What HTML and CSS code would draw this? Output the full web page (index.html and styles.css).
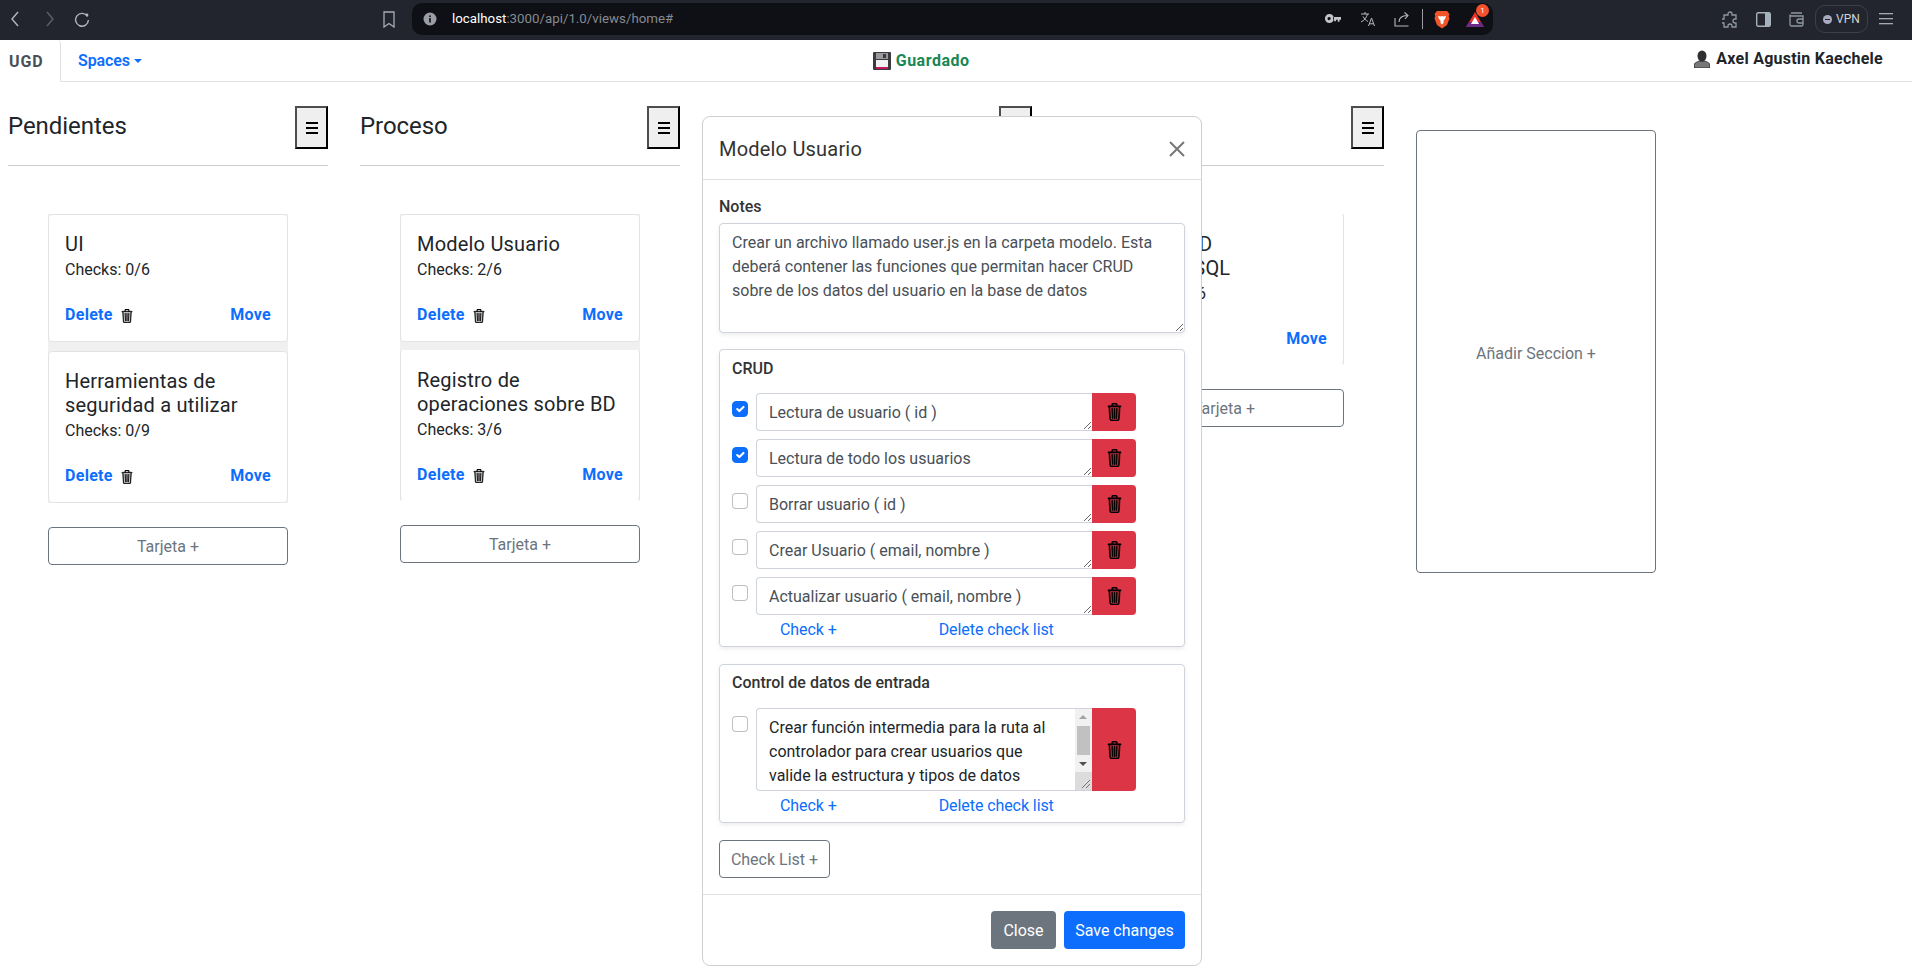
FILE: index.html
```html
<!DOCTYPE html>
<html lang="en">
<head>
    <meta charset="UTF-8">
    <title>UGD</title>
    <link rel="stylesheet" href="styles.css">
</head>
<body>
    <svg class="sprite" width="0" height="0">
        <symbol id="trash" viewBox="0 0 16 16" preserveAspectRatio="none">
            <path d="M6.5 1h3a.5.5 0 0 1 .5.5v1H6v-1a.5.5 0 0 1 .5-.5ZM11 2.5v-1A1.5 1.5 0 0 0 9.5 0h-3A1.5 1.5 0 0 0 5 1.5v1H2.506a.58.58 0 0 0-.01 0H1.5a.5.5 0 0 0 0 1h.538l.853 10.66A2 2 0 0 0 4.885 16h6.23a2 2 0 0 0 1.994-1.84l.853-10.66h.538a.5.5 0 0 0 0-1h-.995a.59.59 0 0 0-.01 0H11Zm1.958 1-.846 10.58a1 1 0 0 1-.997.92h-6.23a1 1 0 0 1-.997-.92L3.042 3.5h9.916Zm-7.487 1a.5.5 0 0 1 .528.47l.5 8.5a.5.5 0 0 1-.998.06L5 5.03a.5.5 0 0 1 .47-.53Zm5.058 0a.5.5 0 0 1 .47.53l-.5 8.5a.5.5 0 1 1-.998-.06l.5-8.5a.5.5 0 0 1 .528-.47ZM8 4.5a.5.5 0 0 1 .5.5v8.5a.5.5 0 0 1-1 0V5a.5.5 0 0 1 .5-.5Z"/>
        </symbol>
        <symbol id="bars" viewBox="0 0 12 12">
            <rect x="0" y="0" width="12" height="2"/>
            <rect x="0" y="5" width="12" height="2"/>
            <rect x="0" y="10" width="12" height="2"/>
        </symbol>
    </svg>

    <div class="browserBar">
        <div class="barNav">
            <svg width="10" height="16" viewBox="0 0 10 16" fill="none" stroke="#b4b7bd" stroke-width="1.4"><path d="M8 1 2 8l6 7"/></svg>
            <svg class="navForward" width="10" height="16" viewBox="0 0 10 16" fill="none" stroke="#5d6068" stroke-width="1.4"><path d="m2 1 6 7-6 7"/></svg>
            <svg class="navReload" width="16" height="16" viewBox="0 0 16 16" fill="none" stroke="#b4b7bd" stroke-width="1.4"><path d="M13.5 5.5A6.4 6.4 0 1 0 14.4 9"/><circle cx="13" cy="4" r="1.4" fill="#b4b7bd" stroke="none"/></svg>
        </div>
        <svg class="barBookmark" width="12" height="17" viewBox="0 0 12 17" fill="none" stroke="#a8abb2" stroke-width="1.3"><path d="M1 1h10v15l-5-3.5L1 16Z"/></svg>
        <div class="urlBox">
            <svg class="urlInfo" width="14" height="14" viewBox="0 0 14 14"><circle cx="7" cy="7" r="6.5" fill="#9a9da3"/><rect x="6.2" y="6" width="1.6" height="4.5" fill="#0e1015"/><rect x="6.2" y="3.4" width="1.6" height="1.6" fill="#0e1015"/></svg>
            <span class="urlText"><b>localhost</b>:3000/api/1.0/views/home#</span>
            <div class="urlIcons">
                <svg width="16" height="10" viewBox="0 0 16 10"><path d="M4.5 0a4.5 4.5 0 1 1-.1 9A4.5 4.5 0 0 1 4.5 0Zm0 3a1.6 1.6 0 1 0 0 3.100A1.600 1.600 0 0 0 4.500 3Z M8 3h8v2.800h-1.500v2h-1.800v-2H11v1.400H9.200V5.800H8Z" fill="#c2c4c8" fill-rule="evenodd"/></svg>
                <svg class="iconTranslate" width="16" height="16" viewBox="0 0 16 16" fill="none" stroke="#b7b9be" stroke-width="1"><path d="M1 3h8M5 1v2M7.500 3C6.500 7 4 9.500 1 11M3 5.500c1 2 3 4 5 5M8.500 15l3-8 3 8M9.500 12.800h4"/></svg>
                <svg class="iconShare" width="16" height="16" viewBox="0 0 16 16" fill="none" stroke="#b7b9be" stroke-width="1.100"><path d="M1 7v8h13.500M5 11c0-4 3-6.500 8-6.500M10.500 1.500 14 4.500l-3 3.500"/></svg>
                <span class="urlSep"></span>
                <svg class="iconBrave" width="16" height="19" viewBox="0 0 16 19"><path d="M3 1h10l2.500 3-.8 2 .8 2.500L13 15l-5 3.500L3 15 .5 8.500 1.300 6 .5 4Z" fill="#f1562b"/><path d="M4 6l2.500.5L8 6l1.500.5L12 6l-1 3-1.500 1.500V13L8 14.500 6.500 13v-2.500L5 9Z" fill="#fff"/></svg>
                <span class="iconBat">
                    <svg width="18" height="17" viewBox="0 0 18 17"><path d="M9 1 18 16H0Z" fill="#e8352b"/><path d="M0 16 3 11h12l3 5Z" fill="#6a2a86"/><path d="M9 6 13 13H5Z" fill="#fff"/></svg>
                    <span class="batBadge">1</span>
                </span>
            </div>
        </div>
        <div class="barRight">
            <svg width="16" height="17" viewBox="0 0 16 17" fill="none" stroke="#8f98a0" stroke-width="1.300"><path d="M6 3a2 2 0 0 1 4 0v1h4v4h-1a2 2 0 0 0 0 4h1v4H10v-1a2 2 0 0 0-4 0v1H2v-4H1a2 2 0 0 1 0-4h1V4h4Z"/></svg>
            <svg class="iconSide" width="15" height="15" viewBox="0 0 15 15"><rect x=".7" y=".7" width="13.600" height="13.600" rx="1.500" fill="none" stroke="#a6b2bb" stroke-width="1.400"/><rect x="9" y="1" width="5" height="13" fill="#a6b2bb"/></svg>
            <svg class="iconWallet" width="15" height="15" viewBox="0 0 15 15" fill="none" stroke="#8f98a0" stroke-width="1.300"><path d="M2 1h11M1 3v9.500A1.500 1.500 0 0 0 2.500 14h10a1.500 1.500 0 0 0 1.500-1.500V4H2.500A1.500 1.500 0 0 1 1 2.500M14 7h-4a2 2 0 0 0 0 4h4"/></svg>
            <div class="vpnPill"><span class="vpnDot"></span>VPN</div>
            <svg class="iconMenu" width="14" height="12" viewBox="0 0 14 12" fill="#a6a9af"><rect width="14" height="1.300"/><rect y="5" width="14" height="1.300"/><rect y="10" width="14" height="1.300"/></svg>
        </div>
    </div>

    <nav class="topNav">
        <div class="navLeft">
            <a class="navTab" href="#">UGD</a>
            <a class="navSpaces" href="#">Spaces<span class="caret"></span></a>
        </div>
        <div class="navStatus">
            <svg width="18" height="18" viewBox="0 0 18 18"><rect width="18" height="18" rx="1" fill="#3b3b3f"/><rect x="3" y="1" width="12" height="6" fill="#9a9a9e"/><rect x="3" y="8" width="12" height="8" fill="#f1f1f1"/><rect x="3" y="15" width="12" height="2" fill="#c2185b"/><rect x="10" y="2" width="3" height="4" fill="#3b3b3f"/></svg>
            <span>Guardado</span>
        </div>
        <div class="navUser">
            <svg width="16" height="18" viewBox="0 0 16 18"><path d="M0 18v-3c0-2 3-3 5-4h6c2 1 5 2 5 4v3Z" fill="#77777a" stroke="#222" stroke-width=".8"/><ellipse cx="8" cy="6" rx="4.500" ry="5.500" fill="#2f2f32"/></svg>
            <span>Axel Agustin Kaechele</span>
        </div>
    </nav>

    <main class="board">
        <section class="column">
            <div class="columnHead">
                <h3>Pendientes</h3>
                <button class="columnMenu"><svg width="12" height="12"><use href="#bars"/></svg></button>
            </div>
            <hr>
            <div class="cardList cardListWide">
                <div class="card">
                    <h5>UI</h5>
                    <p>Checks: 0/6</p>
                    <div class="cardLinks">
                        <a href="#">Delete<svg class="cardTrash"><use href="#trash"/></svg></a>
                        <a href="#">Move</a>
                    </div>
                </div>
                <div class="card">
                    <h5>Herramientas de seguridad a utilizar</h5>
                    <p>Checks: 0/9</p>
                    <div class="cardLinks">
                        <a href="#">Delete<svg class="cardTrash"><use href="#trash"/></svg></a>
                        <a href="#">Move</a>
                    </div>
                </div>
            </div>
            <button class="addCard">Tarjeta +</button>
        </section>

        <section class="column">
            <div class="columnHead">
                <h3>Proceso</h3>
                <button class="columnMenu"><svg width="12" height="12"><use href="#bars"/></svg></button>
            </div>
            <hr>
            <div class="cardList">
                <div class="card">
                    <h5>Modelo Usuario</h5>
                    <p>Checks: 2/6</p>
                    <div class="cardLinks">
                        <a href="#">Delete<svg class="cardTrash"><use href="#trash"/></svg></a>
                        <a href="#">Move</a>
                    </div>
                </div>
                <div class="card cardFlat">
                    <h5>Registro de operaciones sobre BD</h5>
                    <p>Checks: 3/6</p>
                    <div class="cardLinks">
                        <a href="#">Delete<svg class="cardTrash"><use href="#trash"/></svg></a>
                        <a href="#">Move</a>
                    </div>
                </div>
            </div>
            <button class="addCard">Tarjeta +</button>
        </section>

        <section class="column">
            <div class="columnHead">
                <h3>Terminado</h3>
                <button class="columnMenu"><svg width="12" height="12"><use href="#bars"/></svg></button>
            </div>
            <hr>
        </section>

        <section class="column">
            <div class="columnHead">
                <h3>Validación</h3>
                <button class="columnMenu"><svg width="12" height="12"><use href="#bars"/></svg></button>
            </div>
            <hr>
            <div class="cardList">
                <div class="card cardFlat">
                    <h5>Tablas BD<br>usando SQL</h5>
                    <p>Checks: 2/6</p>
                    <div class="cardLinks">
                        <a href="#">Delete<svg class="cardTrash"><use href="#trash"/></svg></a>
                        <a href="#">Move</a>
                    </div>
                </div>
            </div>
            <button class="addCard">Tarjeta +</button>
        </section>

        <button class="addSection">Añadir Seccion +</button>
    </main>

    <div class="modal">
        <div class="modalHead">
            <h5>Modelo Usuario</h5>
            <svg width="16" height="16" viewBox="0 0 16 16" stroke="#777" stroke-width="2"><path d="M1 1l14 14M15 1 1 15"/></svg>
        </div>
        <div class="modalBody">
            <label class="notesLabel">Notes</label>
            <textarea class="notes">Crear un archivo llamado user.js en la carpeta modelo. Esta deberá contener las funciones que permitan hacer CRUD sobre de los datos del usuario en la base de datos</textarea>

            <div class="checkList">
                <h6>CRUD</h6>
                <div class="checkRow">
                    <input type="checkbox" checked>
                    <textarea>Lectura de usuario ( id )</textarea>
                    <button class="checkDelete"><svg><use href="#trash"/></svg></button>
                </div>
                <div class="checkRow">
                    <input type="checkbox" checked>
                    <textarea>Lectura de todo los usuarios</textarea>
                    <button class="checkDelete"><svg><use href="#trash"/></svg></button>
                </div>
                <div class="checkRow">
                    <input type="checkbox">
                    <textarea>Borrar usuario ( id )</textarea>
                    <button class="checkDelete"><svg><use href="#trash"/></svg></button>
                </div>
                <div class="checkRow">
                    <input type="checkbox">
                    <textarea>Crear Usuario ( email, nombre )</textarea>
                    <button class="checkDelete"><svg><use href="#trash"/></svg></button>
                </div>
                <div class="checkRow">
                    <input type="checkbox">
                    <textarea>Actualizar usuario ( email, nombre )</textarea>
                    <button class="checkDelete"><svg><use href="#trash"/></svg></button>
                </div>
                <div class="checkLinks">
                    <a href="#">Check +</a>
                    <a href="#">Delete check list</a>
                </div>
            </div>

            <div class="checkList checkListTall">
                <h6>Control de datos de entrada</h6>
                <div class="checkRow checkRowTall">
                    <input type="checkbox">
                    <div class="scrollArea">
                        <textarea>Crear función intermedia para la ruta al controlador para crear usuarios que valide la estructura y tipos de datos</textarea>
                        <div class="fakeScroll">
                            <span class="scrollUp"></span>
                            <span class="scrollThumb"></span>
                            <span class="scrollDown"></span>
                            <svg class="scrollGrip" width="17" height="18" viewBox="0 0 17 18" stroke="#777" stroke-width="1"><path d="M7 16 15 8M11 16l4-4"/></svg>
                        </div>
                    </div>
                    <button class="checkDelete"><svg><use href="#trash"/></svg></button>
                </div>
                <div class="checkLinks">
                    <a href="#">Check +</a>
                    <a href="#">Delete check list</a>
                </div>
            </div>

            <button class="addList">Check List +</button>
        </div>
        <div class="modalFoot">
            <button class="btnClose">Close</button>
            <button class="btnSave">Save changes</button>
        </div>
    </div>
</body>
</html>
```

FILE: styles.css
```css
* {
    box-sizing: border-box;
}

body {
    margin: 0;
    font-family: Roboto, "Noto Sans", sans-serif;
    font-size: 16px;
    line-height: 24px;
    color: #212529;
    background-color: #fff;
    height: 977px;
    overflow: hidden;
    position: relative;
}

a {
    color: #0d6efd;
    text-decoration: none;
}

button {
    font-family: inherit;
    font-size: 16px;
}

.sprite {
    position: absolute;
}

/* browser chrome */
.browserBar {
    height: 40px;
    padding-bottom: 2px;
    background-color: #22252e;
    display: flex;
    align-items: center;
}

.barNav {
    display: flex;
    align-items: center;
    width: 377px;
    padding-left: 10px;
}

.navForward {
    margin-left: 25px;
}

.navReload {
    margin-left: 19px;
}

.barBookmark {
    margin-left: 6px;
}

.urlBox {
    width: 1081px;
    height: 32px;
    margin-left: 17px;
    background-color: #0e1015;
    border-radius: 10px;
    display: flex;
    align-items: center;
    padding-left: 11px;
    font-size: 13.3px;
    color: #878a91;
}

.urlText {
    margin-left: 15px;
}

.urlText b {
    font-weight: 400;
    color: #fff;
}

.urlIcons {
    margin-left: auto;
    display: flex;
    align-items: center;
    padding-right: 9px;
}

.iconTranslate {
    margin-left: 19px;
}

.iconShare {
    margin-left: 18px;
}

.urlSep {
    width: 1px;
    height: 20px;
    background-color: #9a9ca1;
    margin-left: 12px;
}

.iconBrave {
    margin-left: 11px;
}

.iconBat {
    position: relative;
    margin-left: 16px;
    display: flex;
}

.batBadge {
    position: absolute;
    top: -7px;
    right: -5px;
    width: 13px;
    height: 13px;
    border-radius: 50%;
    background-color: #f4512c;
    color: #fff;
    font-size: 8px;
    line-height: 13px;
    text-align: center;
}

.barRight {
    margin-left: 229px;
    display: flex;
    align-items: center;
}

.iconSide {
    margin-left: 18px;
}

.iconWallet {
    margin-left: 18px;
}

.vpnPill {
    width: 53px;
    height: 28px;
    margin-left: 11px;
    border: 1px solid #3c4048;
    border-radius: 10px;
    display: flex;
    align-items: center;
    padding-left: 7px;
    font-size: 12px;
    color: #d0d3d8;
}

.vpnDot {
    width: 9px;
    height: 9px;
    margin-right: 4px;
    border-radius: 50%;
    background-color: #a8abc0;
    display: flex;
    align-items: center;
    justify-content: center;
}

.vpnDot::after {
    content: "";
    width: 5px;
    height: 1px;
    background-color: #22252e;
}

.iconMenu {
    margin-left: 11px;
}

/* page nav */
.topNav {
    height: 42px;
    border-bottom: 1px solid #dee2e6;
    display: flex;
    justify-content: space-between;
    align-items: center;
    padding-right: 29px;
}

.navLeft {
    display: flex;
    align-items: center;
    height: 41px;
    font-weight: 700;
}

.navTab {
    width: 61px;
    height: 42px;
    padding: 10px 0 0 9px;
    letter-spacing: .9px;
    color: #495057;
    border-right: 1px solid #dee2e6;
    border-top-right-radius: 4px;
    border-bottom: 1px solid #fff;
}

.navSpaces {
    margin-left: 17px;
    margin-top: 1px;
    font-weight: 600;
    letter-spacing: -.1px;
}

.caret {
    display: inline-block;
    margin-left: 4px;
    vertical-align: 3px;
    border-top: 4px solid #0d6efd;
    border-left: 4px solid transparent;
    border-right: 4px solid transparent;
}

.navStatus {
    display: flex;
    align-items: center;
    gap: 5px;
    margin-left: 6px;
    color: #198754;
    font-weight: 700;
    letter-spacing: .5px;
}

.navUser {
    display: flex;
    align-items: center;
    gap: 6px;
    margin-top: -3px;
    font-weight: 700;
    letter-spacing: .25px;
}

/* board */
.board {
    display: flex;
    gap: 32px;
    padding: 24px 8px 0;
    align-items: flex-start;
}

.column {
    width: 320px;
    flex-shrink: 0;
}

.columnHead {
    display: flex;
    justify-content: space-between;
    align-items: center;
    height: 43px;
}

.columnHead h3 {
    margin: -4px 0 0;
    font-size: 24px;
    font-weight: 400;
    line-height: 40px;
    letter-spacing: -.05px;
}

.columnMenu {
    width: 33px;
    height: 43px;
    padding: 0;
    background-color: #efefef;
    border: 2px outset #000;
    border-color: #4d4d4d #000 #000 #4d4d4d;
    display: flex;
    align-items: center;
    justify-content: center;
}

.column hr {
    margin: 16px 0 0;
    border: none;
    border-top: 1px solid #ccc;
}

.cardList {
    margin: 48px 40px 0;
    display: flex;
    flex-direction: column;
    gap: 8px;
    background-color: #f0f0f0;
}

.cardListWide {
    gap: 9px;
}

.card {
    background-color: #fff;
    border: 1px solid #e2e3e5;
    border-radius: 4px;
    padding: 17px 16px 15px;
}

.cardFlat {
    border-top-color: transparent;
    border-bottom-color: transparent;
    padding-bottom: 14px;
}

.card h5 {
    margin: 0 0 2px;
    font-size: 20px;
    font-weight: 400;
    line-height: 24px;
    letter-spacing: .2px;
}

.card p {
    margin: 0 0 22px;
}

.cardLinks {
    display: flex;
    justify-content: space-between;
    line-height: 22px;
    font-weight: 700;
    letter-spacing: .3px;
}

.cardTrash {
    width: 12px;
    height: 14px;
    margin-left: 8px;
    vertical-align: -3px;
    fill: #000;
    stroke: #000;
    stroke-width: .5;
}

.addCard {
    display: block;
    width: 240px;
    height: 38px;
    margin: 24px 40px 0;
    padding-top: 2px;
    background-color: #fff;
    border: 1px solid #6c757d;
    border-radius: 4px;
    color: #6c757d;
}

.addSection {
    width: 240px;
    height: 443px;
    margin-top: 24px;
    padding-top: 4px;
    flex-shrink: 0;
    background-color: #fff;
    border: 1px solid #6c757d;
    border-radius: 4px;
    color: #6c757d;
}

/* modal */
.modal {
    position: absolute;
    left: 702px;
    top: 116px;
    width: 500px;
    height: 850px;
    background-color: #fff;
    border: 1px solid #cfcfcf;
    border-radius: 8px;
}

.modalHead {
    height: 63px;
    padding: 2px 16px 0;
    border-bottom: 1px solid #dee2e6;
    display: flex;
    justify-content: space-between;
    align-items: center;
}

.modalHead h5 {
    margin: 0;
    font-size: 20px;
    font-weight: 400;
    letter-spacing: .2px;
    color: #333;
}

.modalBody {
    padding: 15px 16px 16px;
    border-bottom: 1px solid #dee2e6;
}

.notesLabel {
    display: block;
    margin-bottom: 4px;
    font-weight: 500;
    color: #333;
}

textarea {
    display: block;
    font-family: inherit;
    font-size: 16px;
    line-height: 24px;
    color: #495057;
    padding: 7px 12px 5px;
    border: 1px solid #ced4da;
    outline: none;
}

.notes {
    width: 466px;
    height: 110px;
    margin-bottom: 16px;
    border-radius: 4px;
    box-shadow: 0 2px 4px rgba(0, 0, 0, .075);
}

.checkList {
    width: 466px;
    padding: 7px 12px 0;
    margin-bottom: 17px;
    border: 1px solid #ced4da;
    border-radius: 4px;
    box-shadow: 0 2px 4px rgba(0, 0, 0, .075);
}

.checkListTall {
    padding-top: 6px;
}

.checkList h6 {
    margin: 0 0 12px;
    font-size: 16px;
    font-weight: 500;
    line-height: 24px;
    color: #333;
}

.checkRow {
    display: flex;
    height: 38px;
    margin-bottom: 8px;
}

.checkRowTall {
    height: 83px;
    margin-top: 13px;
}

.checkRow input {
    appearance: none;
    width: 16px;
    height: 16px;
    margin: 8px 8px 0 0;
    flex-shrink: 0;
    border: 1px solid rgba(0, 0, 0, .25);
    border-radius: 4px;
    background-color: #fff;
}

.checkRow input:checked {
    background-color: #0d6efd;
    border-color: #0d6efd;
    background-image: url("data:image/svg+xml,%3csvg xmlns='http://www.w3.org/2000/svg' viewBox='0 0 20 20'%3e%3cpath fill='none' stroke='%23fff' stroke-linecap='round' stroke-linejoin='round' stroke-width='3' d='m6 10 3 3 6-6'/%3e%3c/svg%3e");
}

.checkRow textarea {
    width: 336px;
    height: 100%;
    border-radius: 4px 0 0 4px;
    border-right: none;
}

.scrollArea {
    position: relative;
    width: 336px;
    height: 100%;
}

.scrollArea textarea {
    color: #212529;
    overflow: hidden;
    padding-right: 29px;
}

.fakeScroll {
    position: absolute;
    top: 1px;
    right: 0;
    bottom: 1px;
    width: 17px;
    background-color: #f1f1f1;
}

.scrollUp,
.scrollDown {
    position: absolute;
    left: 4px;
    border-left: 4px solid transparent;
    border-right: 4px solid transparent;
}

.scrollUp {
    top: 6px;
    border-bottom: 4px solid #a3a3a3;
}

.scrollDown {
    top: 53px;
    border-top: 4px solid #505050;
}

.scrollThumb {
    position: absolute;
    top: 17px;
    left: 2px;
    width: 13px;
    height: 29px;
    background-color: #c1c1c1;
}

.scrollGrip {
    position: absolute;
    bottom: 0;
    left: 0;
    background-color: #dcdcdc;
}

.checkDelete {
    width: 44px;
    padding: 0;
    background-color: #dc3545;
    border: none;
    border-radius: 0 4px 4px 0;
    display: flex;
    align-items: center;
    justify-content: center;
}

.checkDelete svg {
    width: 15px;
    height: 18px;
    fill: #000;
    stroke: #000;
    stroke-width: .6;
}

.checkLinks {
    display: flex;
    gap: 102px;
    padding-left: 48px;
    margin-top: -5px;
    height: 28px;
    letter-spacing: -.08px;
}

.addList {
    width: 111px;
    height: 38px;
    background-color: #fff;
    border: 1px solid #6c757d;
    border-radius: 4px;
    color: #6c757d;
}

.modalFoot {
    padding: 16px;
    display: flex;
    justify-content: flex-end;
    gap: 8px;
}

.btnClose,
.btnSave {
    height: 38px;
    border: none;
    border-radius: 4px;
    color: #fff;
}

.btnClose {
    width: 65px;
    background-color: #6c757d;
}

.btnSave {
    width: 121px;
    background-color: #0d6efd;
}
```
